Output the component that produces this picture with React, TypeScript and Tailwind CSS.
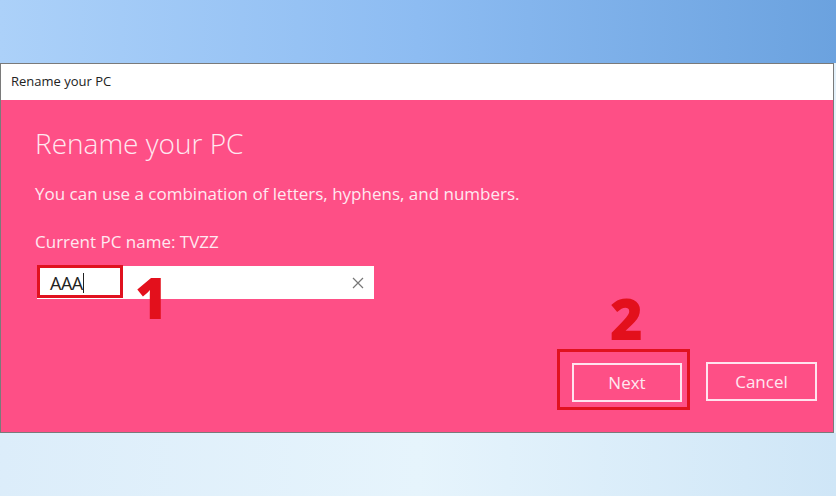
import React from "react";

export default function App() {
  return (
    <div
      className="w-[836px] h-[496px] overflow-hidden flex flex-col bg-[#e3f1fb]"
      style={{ fontFamily: '"Open Sans", "Noto Sans", sans-serif' }}
    >
      <div className="h-[63px] shrink-0 bg-gradient-to-r from-[#acd1f9] via-[#8dbcf2] to-[#6ba2df]" />
      <div className="w-[834px] h-[370px] shrink-0 border border-[#7a7a7a] flex flex-col">
        <div className="h-[36px] shrink-0 bg-white flex items-center pl-[10px] text-[13px] text-[#222]">
          Rename your PC
        </div>
        <div className="flex-1 bg-[#fe4f86] flex flex-col pl-[34px] pr-[14px] text-[#ffe8f0]">
          <div className="mt-[25px] text-[28px] font-light leading-[36px]">Rename your PC</div>
          <div className="mt-[21px] text-[17px] leading-[24px]">
            You can use a combination of letters, hyphens, and numbers.
          </div>
          <div className="mt-[24px] text-[17px] leading-[24px]">Current PC name: TVZZ</div>
          <div className="mt-[12px] ml-[2px] flex items-start h-[33px]">
            <div className="relative w-[337px] h-[33px] bg-white flex items-center">
              <div className="absolute left-0 top-[-1px] w-[86px] h-[33px] border-[3px] border-[#e0121f]" />
              <span className="ml-[13px] text-[18px] text-[#222] leading-none tracking-[-0.5px]">AAA</span>
              <span className="w-px h-[20px] bg-[#222]" />
              <svg className="ml-auto mr-[10px]" width="12" height="12" viewBox="0 0 12 12">
                <path d="M1 1L11 11M11 1L1 11" stroke="#777" strokeWidth="1.2" />
              </svg>
            </div>
            <div className="relative z-10 ml-[-239px] mt-[3px] text-[56px] font-extrabold leading-none text-[#e3101c]">1</div>
          </div>
          <div className="flex-1" />
          <div className="flex items-start justify-end mb-[22px]">
            <div className="relative mr-[16px] border-[3px] border-[#e0121f] pt-[11px] pr-[5px] pb-[5px] pl-[12px]">
              <div className="absolute left-[50px] top-[-62px] text-[56px] font-extrabold leading-none text-[#e3101c]">2</div>
              <div className="w-[110px] h-[39px] border-2 border-[#ffe3ee] flex items-center justify-center text-[17px]">
                Next
              </div>
            </div>
            <div className="mt-[13px] mr-[2px] w-[111px] h-[39px] border-2 border-[#ffe3ee] flex items-center justify-center text-[17px]">
              Cancel
            </div>
          </div>
        </div>
      </div>
      <div className="flex-1 bg-gradient-to-r from-[#dcedfa] via-[#e6f4fc] to-[#cfe6f7]" />
    </div>
  );
}
